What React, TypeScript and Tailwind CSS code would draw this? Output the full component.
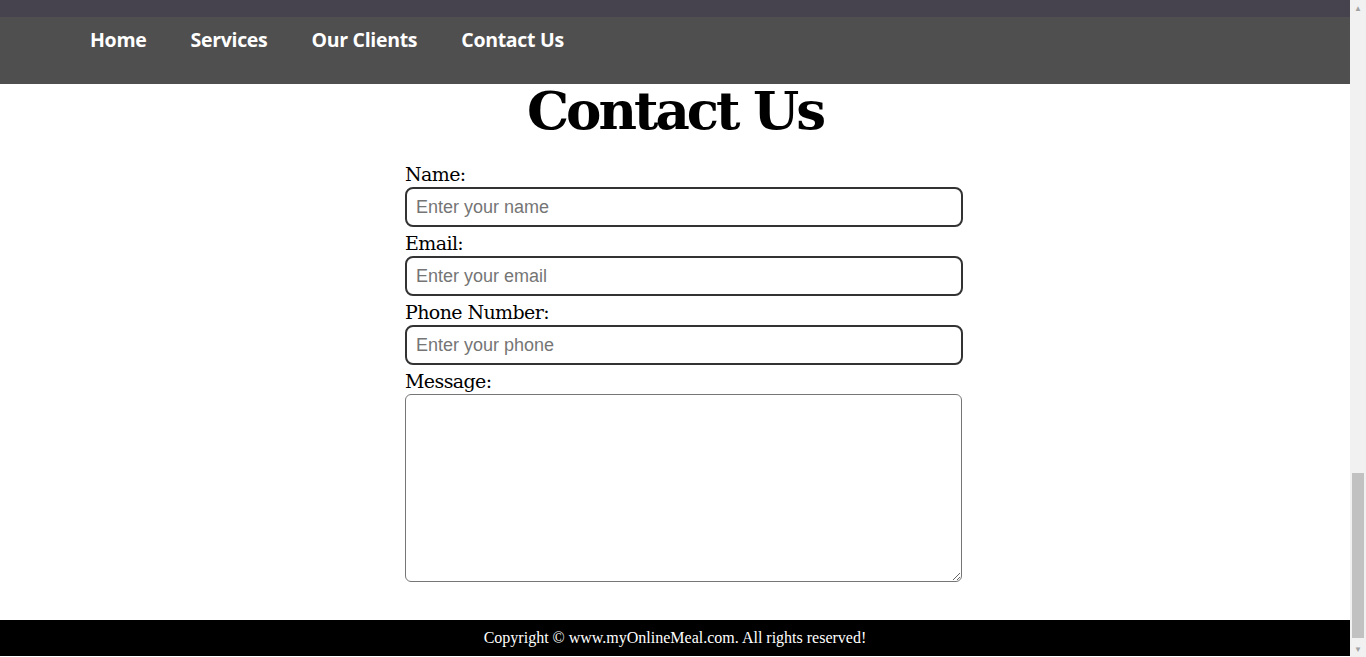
import { useState } from 'react'

const navLinks = ['Home', 'Services', 'Our Clients', 'Contact Us']

interface FieldProps {
  label: string
  placeholder: string
  type?: string
}

function Field({ label, placeholder, type = 'text' }: FieldProps) {
  const [value, setValue] = useState('')
  return (
    <div className="flex flex-col">
      <label className="pt-[3px] text-[19px] leading-[26px] text-black [font-family:'DejaVu_Serif',serif] tracking-[-0.6px]">
        {label}
      </label>
      <input
        type={type}
        value={value}
        onChange={(e) => setValue(e.target.value)}
        placeholder={placeholder}
        className="h-10 w-[558px] rounded-lg border-2 border-[#333] px-[9px] text-[18px] text-black placeholder:text-[#757575] outline-none [font-family:'Liberation_Sans',Arial,sans-serif]"
      />
    </div>
  )
}

export default function App() {
  return (
    <div className="flex h-[657px] w-full overflow-hidden bg-white">
      <div className="flex flex-1 flex-col">
        <div className="h-[17px] bg-[#46434f]" />
        <nav className="flex h-[67px] items-start bg-[#4f4f4f] pl-[90px] pt-[10px]">
          <ul className="flex gap-[44px]">
            {navLinks.map((link) => (
              <li key={link}>
                <a
                  href="#"
                  className="text-[19.5px] font-bold leading-[26px] text-white [font-family:'Open_Sans',sans-serif] tracking-[-0.3px]"
                >
                  {link}
                </a>
              </li>
            ))}
          </ul>
        </nav>

        <main className="flex flex-1 flex-col items-center">
          <h1 className="h-[74px] text-[53px] font-bold leading-[52px] text-black [font-family:'DejaVu_Serif',serif] tracking-[-3px]">
            Contact Us
          </h1>
          <form className="ml-[18px] flex flex-col" onSubmit={(e) => e.preventDefault()}>
            <Field label="Name:" placeholder="Enter your name" />
            <Field label="Email:" placeholder="Enter your email" type="email" />
            <Field label="Phone Number:" placeholder="Enter your phone" type="tel" />
            <div className="flex flex-col">
              <label className="pt-[3px] text-[19px] leading-[26px] text-black [font-family:'DejaVu_Serif',serif] tracking-[-0.6px]">
                Message:
              </label>
              <textarea className="h-[188px] w-[557px] rounded-md border border-[#767676] outline-none" />
            </div>
          </form>
        </main>

        <footer className="mb-px flex h-9 items-center justify-center bg-black">
          <p className="text-[16px] text-white [font-family:'Liberation_Serif',serif]">
            Copyright © www.myOnlineMeal.com. All rights reserved!
          </p>
        </footer>
      </div>

      {/* fake scrollbar */}
      <div className="flex w-4 flex-col bg-[#f1f1f1]">
        <div className="flex h-4 items-center justify-center text-[8px] text-[#a3a3a3]">▲</div>
        <div className="flex-1" />
        <div className="mx-[2px] mb-[3px] h-[165px] bg-[#c1c1c1]" />
        <div className="flex h-4 items-center justify-center text-[8px] text-[#a3a3a3]">▼</div>
      </div>
    </div>
  )
}
